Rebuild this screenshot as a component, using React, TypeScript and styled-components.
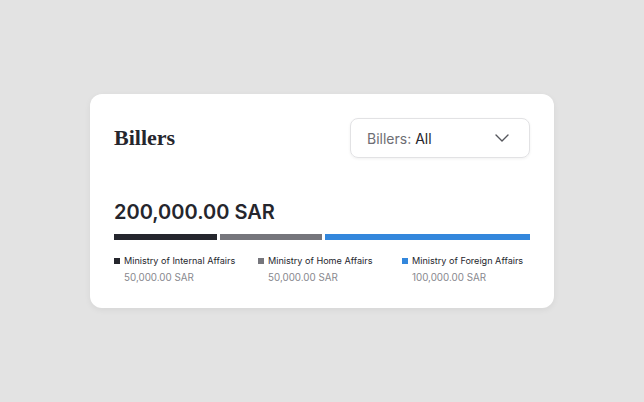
import styled, { createGlobalStyle } from "styled-components";

const GlobalStyle = createGlobalStyle`
  html, body {
    margin: 0;
    padding: 0;
    background: #e3e3e3;
  }
  body {
    font-family: Inter, "Noto Sans", sans-serif;
  }
`;

type Biller = { name: string; amount: number; color: string };

const billers: Biller[] = [
  { name: "Ministry of Internal Affairs", amount: 50000, color: "#25262d" },
  { name: "Ministry of Home Affairs", amount: 50000, color: "#76767c" },
  { name: "Ministry of Foreign Affairs", amount: 100000, color: "#3387dc" },
];

const format = (n: number) =>
  n.toLocaleString("en-US", { minimumFractionDigits: 2, maximumFractionDigits: 2 }) + " SAR";

export default function App() {
  const total = billers.reduce((s, b) => s + b.amount, 0);
  return (
    <>
      <GlobalStyle />
      <Page>
        <Card>
          <Header>
            <Title>Billers</Title>
            <Select>
              <span>
                <Muted>Billers: </Muted>All
              </span>
              <svg width="14" height="8" viewBox="0 0 14 8" fill="none">
                <path d="M1 1l6 6 6-6" stroke="#55565c" strokeWidth="1.4" strokeLinecap="round" strokeLinejoin="round" />
              </svg>
            </Select>
          </Header>
          <Total>{format(total)}</Total>
          <Bar>
            {billers.map((b) => (
              <Segment key={b.name} $color={b.color} style={{ flexGrow: b.amount }} />
            ))}
          </Bar>
          <Legend>
            {billers.map((b) => (
              <LegendItem key={b.name}>
                <LegendLabel>
                  <Swatch $color={b.color} />
                  {b.name}
                </LegendLabel>
                <LegendValue>{format(b.amount)}</LegendValue>
              </LegendItem>
            ))}
          </Legend>
        </Card>
      </Page>
    </>
  );
}

const Page = styled.div`
  width: 644px;
  height: 402px;
  display: flex;
  align-items: center;
  justify-content: center;
`;
const Card = styled.div`
  width: 464px;
  height: 214px;
  box-sizing: border-box;
  padding: 24px 24px 0;
  background: #fff;
  border-radius: 12px;
  box-shadow: 0 2px 6px rgba(0, 0, 0, 0.06);
`;
const Header = styled.div`
  display: flex;
  align-items: center;
  justify-content: space-between;
`;
const Title = styled.h2`
  margin: 0;
  font-family: "Liberation Serif", "DejaVu Serif", serif;
  font-weight: 700;
  font-size: 22px;
  color: #25262d;
`;
const Select = styled.div`
  width: 180px;
  height: 40px;
  box-sizing: border-box;
  padding: 0 20px 0 16px;
  display: flex;
  align-items: center;
  justify-content: space-between;
  border: 1px solid #e2e2e4;
  border-radius: 8px;
  box-shadow: 0 1px 3px rgba(0, 0, 0, 0.06);
  font-size: 14px;
  color: #25262d;
`;
const Muted = styled.span`
  color: #6e6e74;
`;
const Total = styled.div`
  margin-top: 42px;
  font-size: 20px;
  font-weight: 600;
  line-height: 24px;
  color: #25262d;
`;
const Bar = styled.div`
  margin-top: 10px;
  display: flex;
  gap: 3px;
  height: 6px;
`;
const Segment = styled.div<{ $color: string }>`
  flex-basis: 0;
  background: ${(p) => p.$color};
`;
const Legend = styled.div`
  margin-top: 15px;
  display: grid;
  grid-template-columns: repeat(3, 120px);
  column-gap: 24px;
`;
const LegendItem = styled.div`
  display: flex;
  flex-direction: column;
  gap: 5px;
`;
const LegendLabel = styled.div`
  display: flex;
  align-items: center;
  gap: 4px;
  font-size: 9.1px;
  line-height: 12px;
  color: #25262d;
  white-space: nowrap;
`;
const Swatch = styled.span<{ $color: string }>`
  flex-shrink: 0;
  width: 6px;
  height: 6px;
  background: ${(p) => p.$color};
`;
const LegendValue = styled.div`
  padding-left: 10px;
  font-size: 9.8px;
  line-height: 12px;
  color: #88888e;
`;
